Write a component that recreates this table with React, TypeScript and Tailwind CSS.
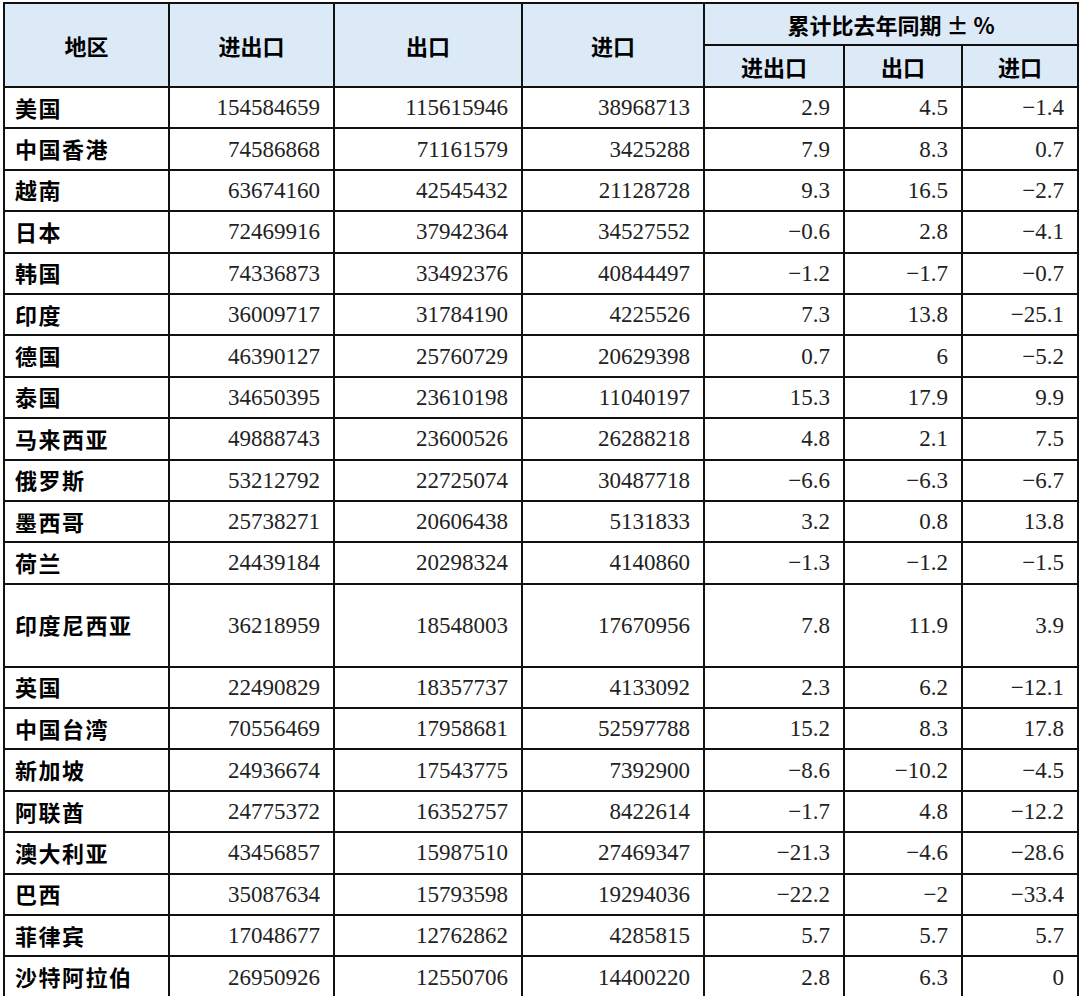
import React from "react";

type Row = [string, string, string, string, string, string, string];

const rows: Row[] = [
  ["美国", "154584659", "115615946", "38968713", "2.9", "4.5", "−1.4"],
  ["中国香港", "74586868", "71161579", "3425288", "7.9", "8.3", "0.7"],
  ["越南", "63674160", "42545432", "21128728", "9.3", "16.5", "−2.7"],
  ["日本", "72469916", "37942364", "34527552", "−0.6", "2.8", "−4.1"],
  ["韩国", "74336873", "33492376", "40844497", "−1.2", "−1.7", "−0.7"],
  ["印度", "36009717", "31784190", "4225526", "7.3", "13.8", "−25.1"],
  ["德国", "46390127", "25760729", "20629398", "0.7", "6", "−5.2"],
  ["泰国", "34650395", "23610198", "11040197", "15.3", "17.9", "9.9"],
  ["马来西亚", "49888743", "23600526", "26288218", "4.8", "2.1", "7.5"],
  ["俄罗斯", "53212792", "22725074", "30487718", "−6.6", "−6.3", "−6.7"],
  ["墨西哥", "25738271", "20606438", "5131833", "3.2", "0.8", "13.8"],
  ["荷兰", "24439184", "20298324", "4140860", "−1.3", "−1.2", "−1.5"],
  ["印度尼西亚", "36218959", "18548003", "17670956", "7.8", "11.9", "3.9"],
  ["英国", "22490829", "18357737", "4133092", "2.3", "6.2", "−12.1"],
  ["中国台湾", "70556469", "17958681", "52597788", "15.2", "8.3", "17.8"],
  ["新加坡", "24936674", "17543775", "7392900", "−8.6", "−10.2", "−4.5"],
  ["阿联酋", "24775372", "16352757", "8422614", "−1.7", "4.8", "−12.2"],
  ["澳大利亚", "43456857", "15987510", "27469347", "−21.3", "−4.6", "−28.6"],
  ["巴西", "35087634", "15793598", "19294036", "−22.2", "−2", "−33.4"],
  ["菲律宾", "17048677", "12762862", "4285815", "5.7", "5.7", "5.7"],
  ["沙特阿拉伯", "26950926", "12550706", "14400220", "2.8", "6.3", "0"],
];

const head =
  "border-2 border-[#111] bg-[#dce9f6] text-center font-bold text-[22px] text-black font-['Noto_Sans_CJK_SC',sans-serif]";
const num =
  "border-2 border-[#111] text-right pr-[13px] text-[23px] text-[#222] font-['Liberation_Serif',serif]";
const name =
  "border-2 border-[#111] text-left pl-[10px] pb-[2px] font-bold text-[22px] tracking-[1.5px] text-black font-['Noto_Sans_CJK_SC',sans-serif]";

export default function App() {
  return (
    <div className="min-h-screen bg-white pl-[3px] pt-[2px]">
      <table className="table-fixed border-collapse w-[1074px] leading-none">
        <colgroup>
          <col className="w-[165px]" />
          <col className="w-[165px]" />
          <col className="w-[188px]" />
          <col className="w-[182px]" />
          <col className="w-[140px]" />
          <col className="w-[118px]" />
          <col className="w-[116px]" />
        </colgroup>
        <thead>
          <tr className="h-[42px]">
            <th rowSpan={2} className={head}>地区</th>
            <th rowSpan={2} className={head}>进出口</th>
            <th rowSpan={2} className={head}>出口</th>
            <th rowSpan={2} className={head}>进口</th>
            <th colSpan={3} className={head}>累计比去年同期 ± %</th>
          </tr>
          <tr className="h-[42px]">
            <th className={head}>进出口</th>
            <th className={head}>出口</th>
            <th className={head}>进口</th>
          </tr>
        </thead>
        <tbody>
          {rows.map((r) => (
            <tr key={r[0]} className={r[0] === "印度尼西亚" ? "h-[83px]" : "h-[41.4px]"}>
              <td className={name}>{r[0]}</td>
              {r.slice(1).map((v, i) => (
                <td key={i} className={num}>{v}</td>
              ))}
            </tr>
          ))}
        </tbody>
      </table>
    </div>
  );
}
